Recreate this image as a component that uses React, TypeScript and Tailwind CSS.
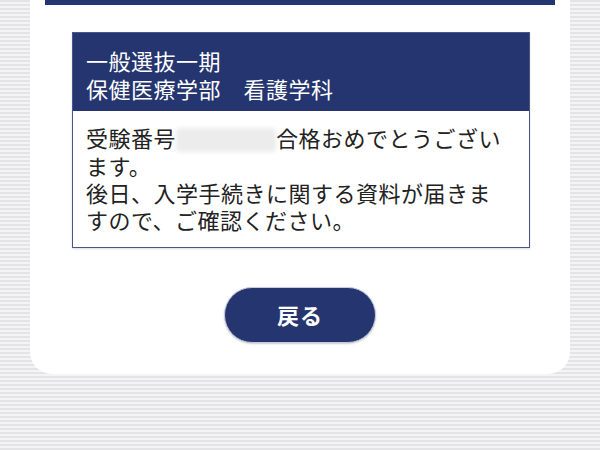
export default function App() {
  return (
    <div
      className="w-[600px] h-[450px] overflow-hidden bg-[repeating-linear-gradient(to_bottom,#e4e4e6_0px,#e4e4e6_2px,#f4f4f4_2px,#f4f4f4_4px)]"
      style={{ fontFamily: '"Noto Sans CJK JP", "Noto Sans", sans-serif' }}
    >
      <div className="mx-[30px] bg-white rounded-b-[22px] pb-[31px]">
        {/* 上部バー */}
        <div className="mx-[15px] h-[5px] bg-[#25356f]" />

        {/* 結果ボックス */}
        <div className="ml-[42px] mr-[40px] mt-[27px] border border-[#4b5685] shadow-[0_1px_2px_rgba(0,0,0,0.15)]">
          <div className="bg-[#25356f] text-white text-[22px] leading-[28px] tracking-[0.5px] pl-[13px] pt-[13px] pb-[9px]">
            <p>一般選抜一期</p>
            <p>保健医療学部　看護学科</p>
          </div>
          <div className="bg-white text-[#222] text-[22px] leading-[27px] tracking-[0.5px] pl-[13px] pt-[13px] pb-[14px] whitespace-nowrap">
            <p>
              受験番号
              <span className="inline-block align-middle w-[100px] h-[24px] -mt-[3px] bg-[#ececec] blur-[2px] rounded-sm" />
              合格おめでとうござい
              <br />
              ます。
            </p>
            <p>
              後日、入学手続きに関する資料が届きま
              <br />
              すので、ご確認ください。
            </p>
          </div>
        </div>

        <div className="flex justify-center mt-[39px]">
          <button className="w-[152px] h-[56px] rounded-full bg-[#25356f] border border-[#c5cade] text-white text-[22px] font-bold tracking-[1px] shadow-[0_1px_2px_rgba(0,0,0,0.2)]">
            戻る
          </button>
        </div>
      </div>
    </div>
  )
}
